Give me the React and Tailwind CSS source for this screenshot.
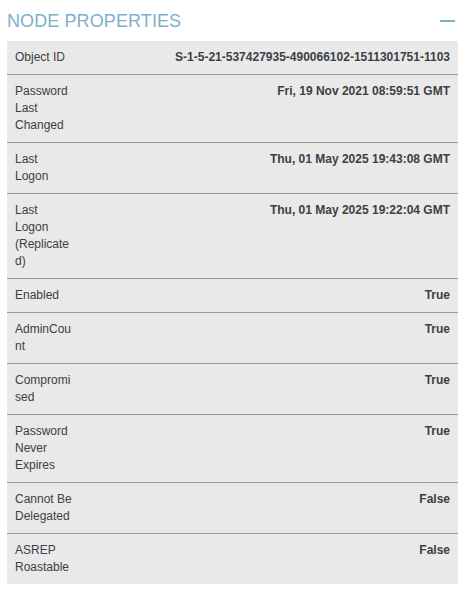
import React from "react";

const ROWS = [
  ["Object ID", "S-1-5-21-537427935-490066102-1511301751-1103"],
  ["Password Last Changed", "Fri, 19 Nov 2021 08:59:51 GMT"],
  ["Last Logon", "Thu, 01 May 2025 19:43:08 GMT"],
  ["Last Logon (Replicated)", "Thu, 01 May 2025 19:22:04 GMT"],
  ["Enabled", "True"],
  ["AdminCount", "True"],
  ["Compromised", "True"],
  ["Password Never Expires", "True"],
  ["Cannot Be Delegated", "False"],
  ["ASREP Roastable", "False"],
];

export default function App() {
  return (
    <div className="min-h-[593px] bg-white px-[7px] font-['Liberation_Sans',Arial,sans-serif]">
      <div className="flex h-[41px] items-center justify-between">
        <h2 className="text-[18px] leading-none text-[#7eb1c8] tracking-[0.1px]">NODE PROPERTIES</h2>
        <div className="mr-[5px] h-[2px] w-[15px] bg-[#7eb1c8]" />
      </div>
      <div className="w-[451px] bg-[#e9e9e9]">
        {ROWS.map(([label, value], i) => (
          <div
            key={label}
            className={
              "flex px-2 py-2 text-[12px] leading-[17px] text-[#3b4045]" +
              (i < ROWS.length - 1 ? " border-b border-[#9a9a9a]" : "")
            }
          >
            <div className="w-[57px] shrink-0 break-words">{label}</div>
            <div className="flex-1 text-right font-bold">{value}</div>
          </div>
        ))}
      </div>
    </div>
  );
}
